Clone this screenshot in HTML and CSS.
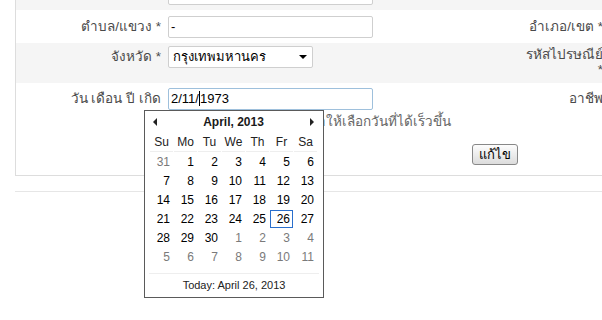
FILE: index.html
```html
<!DOCTYPE html>
<html lang="th">
<head>
<meta charset="utf-8">
<link rel="stylesheet" href="styles.css">
</head>
<body>
<div class="page">
  <div class="panel">
    <div class="row row-top gray">
      <div class="label"></div>
      <div class="field"><div class="input input-cut"></div></div>
    </div>
    <div class="row row-1">
      <div class="label">ตำบล/แขวง *</div>
      <div class="field"><div class="input">-</div></div>
      <div class="label label-right">อำเภอ/เขต *</div>
    </div>
    <div class="row row-2 gray">
      <div class="label">จังหวัด *</div>
      <div class="field"><div class="select"><span>กรุงเทพมหานคร</span><span class="caret-down"></span></div></div>
      <div class="label label-right label-wrap">รหัสไปรษณีย์<br>*</div>
    </div>
    <div class="row row-3">
      <div class="label">วัน เดือน ปี เกิด</div>
      <div class="field"><div class="input input-focus">2/11/<span class="cursor"></span>1973</div></div>
      <div class="label label-right">อาชีพ</div>
      <div class="hint">คลิกเพื่อเปิดปฏิทินช่วยทำให้เลือกวันที่ได้เร็วขึ้น</div>
      <div class="actions"><span class="btn">แก้ไข</span></div>
    </div>
  </div>
  <div class="rule"></div>

  <div class="calendar">
    <div class="cal-head">
      <span class="arrow arrow-left"></span>
      <span class="cal-title">April, 2013</span>
      <span class="arrow arrow-right"></span>
    </div>
    <table class="cal-grid">
      <thead>
        <tr><th>Su</th><th>Mo</th><th>Tu</th><th>We</th><th>Th</th><th>Fr</th><th>Sa</th></tr>
      </thead>
      <tbody>
        <tr><td class="other">31</td><td>1</td><td>2</td><td>3</td><td>4</td><td>5</td><td>6</td></tr>
        <tr><td>7</td><td>8</td><td>9</td><td>10</td><td>11</td><td>12</td><td>13</td></tr>
        <tr><td>14</td><td>15</td><td>16</td><td>17</td><td>18</td><td>19</td><td>20</td></tr>
        <tr><td>21</td><td>22</td><td>23</td><td>24</td><td>25</td><td class="today">26</td><td>27</td></tr>
        <tr><td>28</td><td>29</td><td>30</td><td class="other">1</td><td class="other">2</td><td class="other">3</td><td class="other">4</td></tr>
        <tr><td class="other">5</td><td class="other">6</td><td class="other">7</td><td class="other">8</td><td class="other">9</td><td class="other">10</td><td class="other">11</td></tr>
      </tbody>
    </table>
    <div class="cal-foot">Today: April 26, 2013</div>
  </div>
</div>
</body>
</html>
```
FILE: styles.css
```css
html, body {
  margin: 0;
  padding: 0;
  overflow: hidden;
  background: #fff;
}
body {
  font-family: Tahoma, "Liberation Sans", "Noto Sans", sans-serif;
  font-size: 13px;
  color: #555;
}
.page {
  position: relative;
  width: 602px;
  height: 320px;
}
.panel {
  margin-left: 15px;
  width: 958px;
  border-left: 1px solid #ddd;
  border-bottom: 1px solid #ddd;
}
.row {
  display: grid;
  grid-template-columns: 145px 205px 223px;
  column-gap: 7px;
  align-items: start;
  box-sizing: border-box;
}
.gray { background: #f5f5f5; }
.row-top { height: 10px; overflow: hidden; }
.row-1 { height: 33px; padding-top: 6px; }
.row-2 { height: 40px; padding-top: 3px; }
.row-3 { height: 92px; padding-top: 5px; grid-template-rows: 22px 24px 32px; }
.label {
  text-align: right;
  line-height: 22px;
  font-size: 13.5px;
  color: #4a4a4a;
  white-space: nowrap;
}
.label-wrap { line-height: 15px; padding-top: 1px; }
.input {
  box-sizing: border-box;
  height: 22px;
  border: 1px solid #cfcfcf;
  border-radius: 2px;
  background: #fff;
  padding: 0 3px 0 2px;
  font-family: "Liberation Sans", Tahoma, sans-serif;
  font-size: 13px;
  line-height: 20px;
  color: #000;
}
.input-cut { margin-top: -17px; }
.input-focus { border-color: #9ec0dc; }
.cursor {
  display: inline-block;
  width: 1px;
  height: 15px;
  background: #000;
  vertical-align: -3px;
}
.select {
  box-sizing: border-box;
  width: 145px;
  height: 22px;
  border: 1px solid #cfcfcf;
  border-radius: 2px;
  background: #fff;
  display: flex;
  align-items: center;
  justify-content: space-between;
  padding: 0 5px 0 4px;
  color: #000;
  line-height: 20px;
}
.caret-down {
  width: 0;
  height: 0;
  border-left: 4px solid transparent;
  border-right: 4px solid transparent;
  border-top: 4px solid #000;
}
.hint {
  grid-column: 2 / 4;
  grid-row: 2;
  padding-left: 10px;
  line-height: 24px;
  font-size: 13.5px;
  color: #666;
  white-space: nowrap;
}
.actions {
  grid-column: 1 / -1;
  grid-row: 3;
  display: flex;
  justify-content: center;
  width: 958px;
  padding-top: 10px;
}
.btn {
  box-sizing: border-box;
  height: 21px;
  padding: 0 6px;
  border: 1px solid #888;
  border-radius: 3px;
  background: linear-gradient(#fdfdfd, #dcdcdc);
  color: #000;
  line-height: 19px;
}
.rule {
  margin-left: 15px;
  margin-top: 15px;
  border-top: 1px solid #e6e6e6;
}

/* calendar popup */
.calendar {
  position: absolute;
  left: 144px;
  top: 110px;
  width: 178px;
  height: 186px;
  border: 1px solid #5a5a5a;
  background: #fff;
  font-family: "Liberation Sans", Tahoma, sans-serif;
  font-size: 11px;
  color: #000;
}
.cal-head {
  height: 22px;
  display: flex;
  align-items: center;
  justify-content: space-between;
  padding: 0 9px 0 8px;
}
.cal-title {
  font-weight: bold;
  font-size: 12px;
  color: #1a1a1a;
}
.arrow {
  width: 0;
  height: 0;
  border-top: 4px solid transparent;
  border-bottom: 4px solid transparent;
}
.arrow-left { border-right: 4px solid #222; }
.arrow-right { border-left: 4px solid #222; }
.cal-grid {
  border-collapse: separate;
  border-spacing: 1px;
  margin-left: 4px;
  margin-top: -1px;
  table-layout: fixed;
}
.cal-grid th {
  width: 23px;
  height: 18px;
  padding: 0;
  font-weight: normal;
  font-size: 12px;
  color: #222;
  text-align: center;
  border-bottom: 1px solid #eee;
}
.cal-grid td {
  width: 23px;
  height: 18px;
  padding: 0 3px 0 0;
  box-sizing: border-box;
  text-align: right;
  font-size: 12px;
  color: #000;
}
.cal-grid td.other { color: #7a7a7a; }
.cal-grid td.today {
  border: 1px solid #2a6fcc;
  padding-right: 2px;
}
.cal-foot {
  margin: 6px 4px 0;
  border-top: 1px solid #eee;
  text-align: center;
  line-height: 22px;
  color: #222;
}
```
